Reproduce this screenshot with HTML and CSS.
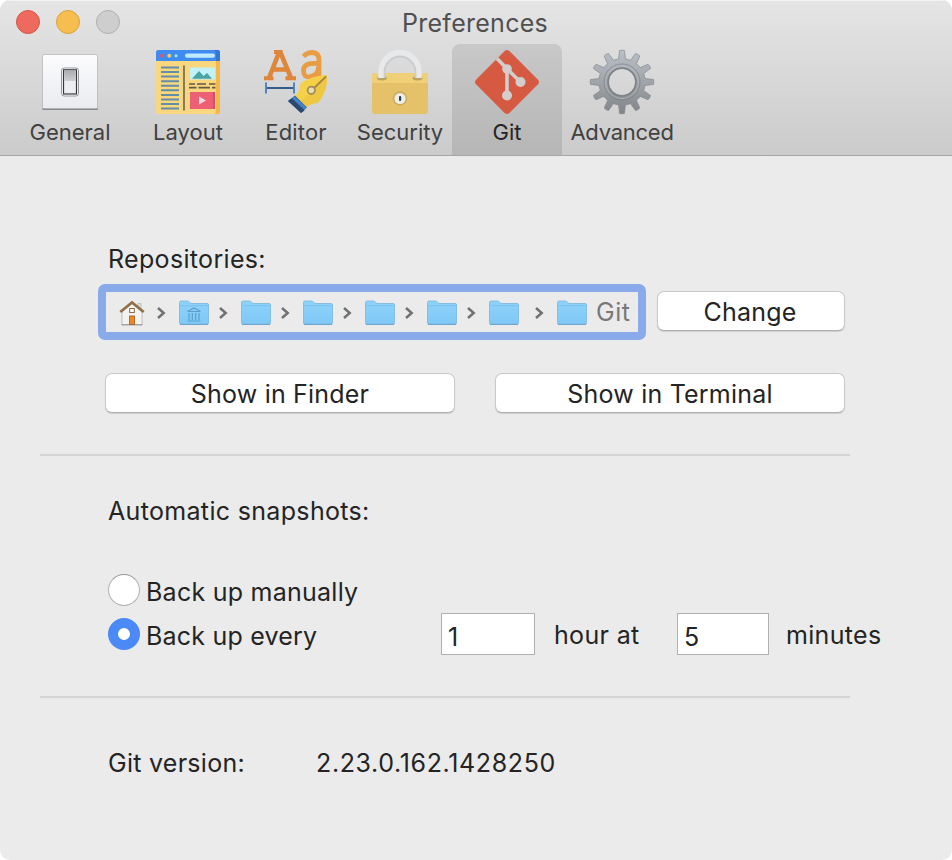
FILE: index.html
```html
<!DOCTYPE html>
<html lang="en">
<head>
<meta charset="utf-8">
<title>Preferences</title>
<link rel="stylesheet" href="styles.css">
</head>
<body>
<svg class="defs" width="0" height="0" aria-hidden="true">
  <defs>
    <linearGradient id="folderFill" x1="0" y1="0" x2="0" y2="1"><stop offset="0" stop-color="#8dd3fb"/><stop offset="1" stop-color="#80c9f6"/></linearGradient>
    <linearGradient id="gearFill" x1="0" y1="0" x2="0" y2="1"><stop offset="0" stop-color="#b9c0c6"/><stop offset=".5" stop-color="#a0a5aa"/><stop offset="1" stop-color="#818488"/></linearGradient>
    <linearGradient id="plate" x1="0" y1="0" x2="0" y2="1"><stop offset="0" stop-color="#fcfcfe"/><stop offset="1" stop-color="#e9ebef"/></linearGradient>
    <linearGradient id="rocker" x1="0" y1="0" x2="0" y2="1"><stop offset="0" stop-color="#a9abae"/><stop offset="1" stop-color="#cdcfd1"/></linearGradient>
    <symbol id="folder" viewBox="0 0 32 26">
      <path d="M1.500 23V2.500Q1.500 1 3 1H9.500Q10.500 1 11.500 2.200L13 3.500H29.500Q30.500 3.500 30.500 5V23Q30.500 24.300 29 24.300H3Q1.500 24.300 1.500 23Z" fill="url(#folderFill)" stroke="#78b6dc" stroke-width=".8"/>
      <path d="M2 5.700H30" stroke="#78bce6" stroke-width=".8"/><path d="M2 24.400H30" stroke="#68a4cb"/>
    </symbol>
    <symbol id="chevron" viewBox="0 0 10 14"><path d="M2 2L7.700 7L2 12" fill="none" stroke="#717171" stroke-width="2.500"/></symbol>
  </defs>
</svg>
<div class="window">
  <header class="titlebar">
    <div class="caption">
      <div class="lights"><i class="light close"></i><i class="light minimize"></i><i class="light zoom"></i></div>
      <h1 class="title">Preferences</h1>
    </div>
    <nav class="toolbar">
      <div class="tab general">
        <svg class="icon" viewBox="0 0 72 72">
          <rect x="8.500" y="9.500" width="55" height="55" rx="1.500" fill="url(#plate)" stroke="#b5b7ba" stroke-width=".8"/>
          <path d="M8.500 64.200H63.700" stroke="#77797c" stroke-width="1.300"/>
          <rect x="27.500" y="23" width="17" height="28" rx="2.500" fill="#fff" stroke="#97999c"/>
          <rect x="29.500" y="24.800" width="13" height="24.200" fill="#eceef1" stroke="#37383b" stroke-width="1.200"/>
          <path d="M30.200 25.400H41.800V36H30.200Z" fill="url(#rocker)"/>
        </svg>
        <span class="label">General</span>
      </div>
      <div class="tab layout">
        <svg class="icon" viewBox="0 0 72 72">
          <rect x="4" y="5" width="64" height="64" rx="2.500" fill="#f9d77f"/>
          <path d="M64 14H68V66.500Q68 69 65.500 69H62Q64 68 64 66Z" fill="#f6b745"/>
          <path d="M4 16V7.500Q4 5 6.500 5H65.500Q68 5 68 7.500V16Z" fill="#3f8cf0"/>
          <path d="M62 5H65.500Q68 5 68 7.500V16H64V7.500Z" fill="#3177d8"/>
          <circle cx="10" cy="10.700" r="2" fill="#d85875"/><circle cx="17.300" cy="10.700" r="2" fill="#eccb75"/><circle cx="24" cy="10.700" r="1.500" fill="#a8e8fa"/>
          <rect x="33" y="8.600" width="30" height="4.200" rx="2.100" fill="#bfe9ff"/>
          <path d="M9 22.500H27M9 27H27M9 31.600H27M9 36.200H27M9 40.800H27M9 45.300H27M9 49.900H27M9 54.400H27M9 59H27M9 63.500H27" stroke="#608fa6" stroke-width="2"/>
          <path d="M32 20.500V65.500" stroke="#7c715e" stroke-width="1.800"/>
          <rect x="38" y="22.500" width="25" height="12" fill="#c2f1f8"/><path d="M40 33.700L47 26L51.500 31L55 28L60 33.700Z" fill="#4aa3a5"/>
          <path d="M37 39H43M45 39H54M57 39H63.500M37 42.700H44.500M46.500 42.700H58M60 42.700H63.500" stroke="#665745" stroke-width="1.700"/>
          <rect x="38" y="47" width="25" height="17" fill="#ed5f74"/><path d="M61 47H63V64H61Z" fill="#d84e66"/><path d="M47 51.500L54 55.500L47 59.500Z" fill="#f9d8df"/>
        </svg>
        <span class="label">Layout</span>
      </div>
      <div class="tab editor">
        <svg class="icon" viewBox="0 0 72 72">
          <g fill="none" stroke="#de873a" stroke-width="4.600"><path d="M9 33L19 7.500H20.500L31 33M13 24.500H27.500"/><path d="M4 33.300H13.500M25.500 33.300H36M14 7H22.500" stroke-width="3.900"/></g>
          <path d="M43.500 11.500Q47 7.500 52.500 7.500Q59 7.800 59 15V33M58.500 18.500Q43.500 17 43.500 25.500Q43.500 32.500 49.500 31.800Q58.500 30.500 58.500 22" fill="none" stroke="#e99d43" stroke-width="4.800"/>
          <path d="M6 43H33" stroke="#335d8b" stroke-width="2"/><path d="M6 37.500V48.500M34 37.500V48.500" stroke="#5286bb" stroke-width="2"/>
          <path d="M35 51Q40 47 40.500 38.500Q50 31 67 30Q68 46 58 58Q52 58 46 62Z" fill="#f4d146"/>
          <path d="M67 30Q68 46 58 58Q52 58 46 62L41 56.500Z" fill="#e8bd40" opacity=".5"/>
          <path d="M52 45L66 31.500" stroke="#a58744" stroke-width="1.800"/><circle cx="51.300" cy="45.300" r="3.700" fill="#eadcae" stroke="#a08d60" stroke-width="1.800"/>
          <path d="M35 50.500L47 62.500L41 68L28 56Z" fill="#396ea9"/><path d="M31.500 53.500L44.500 65.500L41 68L28 56Z" fill="#29486e"/>
          <path d="M33.500 52.500L45.500 63.500" stroke="#4b87cb" stroke-width="2"/>
        </svg>
        <span class="label">Editor</span>
      </div>
      <div class="tab security">
        <svg class="icon" viewBox="0 0 72 72">
          <rect x="8" y="28" width="56" height="41" rx="3" fill="#e5c269"/>
          <path d="M8 37V32Q8 28 12 28H60Q64 28 64 32V38H8Z" fill="#efd079"/>
          <ellipse cx="18" cy="33.300" rx="4.800" ry="2.200" fill="#bda45e"/><ellipse cx="53.500" cy="33.300" rx="4.800" ry="2.200" fill="#bda45e"/>
          <path d="M17.500 33V26.500A18.500 18.500 0 0 1 54.500 26.500V33" fill="none" stroke="#e8e9ea" stroke-width="6.400"/>
          <path d="M20.500 33V27A15.500 15.500 0 0 1 51.500 27V33" fill="none" stroke="#cacdcd" stroke-width="1.800"/>
          <circle cx="36" cy="53.500" r="7.200" fill="#c9ab60"/><circle cx="36" cy="53.500" r="5.600" fill="#eeeee5"/><rect x="35" y="51" width="2.200" height="5" rx="1" fill="#263f54"/>
        </svg>
        <span class="label">Security</span>
      </div>
      <div class="tab git selected">
        <svg class="icon" viewBox="0 0 72 72">
          <path d="M33.600 6.100Q36 3.800 38.400 6.100L67 34.700Q69 37 67 39.300L38.400 68Q36 70 33.600 68L5 39.300Q3 37 5 34.700Z" fill="#d65a42"/>
          <path d="M26 13.500L36 23.700V50.500M36 23.700L49.500 37" fill="none" stroke="#d3cdcb" stroke-width="3.600"/>
          <g fill="#d3cdcb"><circle cx="36" cy="24" r="4.800"/><circle cx="36" cy="50.500" r="5"/><circle cx="49.500" cy="37" r="5"/></g>
        </svg>
        <span class="label">Git</span>
      </div>
      <div class="tab advanced">
        <svg class="icon" viewBox="0 0 72 72">
          <path d="M32.600 13.900L33.500 5.600Q36 4.700 38.500 5.600L39.400 13.900L44.600 15.300L49.500 8.500Q52.100 9 53.800 11L50.400 18.700L54.300 22.600L62 19.200Q64 20.900 64.500 23.500L57.700 28.400L59.100 33.600L67.400 34.500Q68.300 37 67.400 39.500L59.100 40.400L57.700 45.600L64.500 50.500Q64 53.100 62 54.800L54.300 51.400L50.400 55.300L53.800 63Q52.100 65 49.500 65.500L44.600 58.700L39.400 60.100L38.500 68.400Q36 69.300 33.500 68.400L32.600 60.100L27.400 58.700L22.500 65.500Q19.900 65 18.200 63L21.600 55.300L17.700 51.400L10 54.800Q8 53.100 7.500 50.500L14.300 45.600L12.900 40.400L4.600 39.500Q3.700 37 4.600 34.500L12.900 33.600L14.300 28.400L7.500 23.500Q8 20.900 10 19.200L17.700 22.600L21.600 18.700L18.200 11Q19.900 9 22.500 8.500L27.400 15.300ZM36 23.500A13.500 13.500 0 1 0 36 50.500A13.500 13.500 0 1 0 36 23.500Z" fill="url(#gearFill)" stroke="#83888c" stroke-width=".7" fill-rule="evenodd"/>
          <circle cx="36" cy="37" r="18" fill="none" stroke="#777d82" stroke-width="1" opacity=".65"/>
          <circle cx="36" cy="37" r="14" fill="none" stroke="#7c8286" stroke-width="1.500"/>
          <circle cx="36" cy="37" r="16.500" fill="none" stroke="#b8bdc1" stroke-width="1" opacity=".6"/>
        </svg>
        <span class="label">Advanced</span>
      </div>
    </nav>
  </header>
  <main class="content">
    <section class="repositories">
      <h2 class="heading t-repos">Repositories:</h2>
      <div class="path-row">
        <div class="path">
          <svg class="home" viewBox="0 0 28 28"><path d="M20 4.500H23V11H20Z" fill="#ddd" stroke="#aaa" stroke-width=".6"/><path d="M4 12L14 4L24 12V26H4Z" fill="#f3f3f2" stroke="#aaa" stroke-width=".7"/><path d="M3.500 25.700H24.500" stroke="#999"/><path d="M2.300 13L14 3.500L25.700 13" fill="none" stroke="#916f48" stroke-width="2.800"/><rect x="11.700" y="9.500" width="4.600" height="4" fill="#fff" stroke="#8c6a48"/><rect x="11.500" y="17" width="5" height="8.500" fill="#e98a27" stroke="#a96724" stroke-width=".9"/></svg>
          <svg class="chevron"><use href="#chevron"/></svg>
          <svg class="folder" viewBox="0 0 32 26"><use href="#folder"/><path d="M9.500 11.500L16 8L22.500 11.500ZM11 13V20M14.300 13V20M17.700 13V20M21 13V20M9.500 21H22.500" fill="none" stroke="#5aa0cf" stroke-width="1.200"/></svg>
          <svg class="chevron"><use href="#chevron"/></svg><svg class="folder"><use href="#folder"/></svg>
          <svg class="chevron"><use href="#chevron"/></svg><svg class="folder"><use href="#folder"/></svg>
          <svg class="chevron"><use href="#chevron"/></svg><svg class="folder"><use href="#folder"/></svg>
          <svg class="chevron"><use href="#chevron"/></svg><svg class="folder"><use href="#folder"/></svg>
          <svg class="chevron"><use href="#chevron"/></svg><svg class="folder"><use href="#folder"/></svg>
          <svg class="chevron last"><use href="#chevron"/></svg><svg class="folder"><use href="#folder"/></svg>
          <span class="leaf">Git</span>
        </div>
        <button class="button change">Change</button>
      </div>
      <div class="actions">
        <button class="button finder">Show in Finder</button>
        <button class="button terminal">Show in Terminal</button>
      </div>
    </section>
    <hr class="divider">
    <section class="snapshots">
      <h2 class="heading t-auto">Automatic snapshots:</h2>
      <div class="option"><i class="radio"></i><span class="t-manual">Back up manually</span></div>
      <div class="option"><i class="radio checked"></i><span class="every">Back up every</span><span class="field hours">1</span><span class="unit t-hour">hour at</span><span class="field mins">5</span><span class="unit t-min">minutes</span></div>
    </section>
    <hr class="divider">
    <section class="version"><span class="version-name">Git version:</span><span class="version-number">2.23.0.162.1428250</span></section>
  </main>
</div>
</body>
</html>
```
FILE: styles.css
```css
* { box-sizing: border-box; }
body { margin: 0; background: #fff; font: 420 25px/30px Inter, "Liberation Sans", sans-serif; letter-spacing: .2px; color: #242424; }
h1, h2 { margin: 0; font: inherit; }
svg { display: block; flex: none; }
.defs { position: absolute; }
.window { width: 952px; height: 860px; overflow: hidden; border-radius: 10px; background: #ebebeb; }
.titlebar { height: 156px; background: linear-gradient(#e5e5e5, #cbcbcb); border-bottom: 1px solid #a6a6a6; box-shadow: inset 0 1px #f3f3f3; }
.caption { display: grid; grid-template-columns: 402px 1fr; height: 44px; align-items: center; }
.lights { display: flex; gap: 16px; padding-left: 16px; }
.light { width: 24px; height: 24px; border-radius: 50%; border: 1px solid; }
.close { background: #ee6a5f; border-color: #d65549; }
.minimize { background: #f5be4f; border-color: #d9a23d; }
.zoom { background: #cecece; border-color: #b0b0b0; }
.title { color: #505050; padding-top: 2px; white-space: nowrap; letter-spacing: .27px; }
.toolbar { display: flex; padding-left: 11px; height: 111px; color: #414141; font-size: 22px; font-weight: 440; line-height: 28px; letter-spacing: 0; }
.tab { display: flex; flex-direction: column; align-items: center; padding-top: 1px; }
.icon { width: 72px; height: 72px; }
.label { margin-top: 1px; white-space: nowrap; }
.editor .label { letter-spacing: .15px; }
.advanced .label { letter-spacing: -.25px; }
.general, .layout { width: 118px; }
.editor { width: 98px; }
.security { width: 104px; margin-left: 3px; }
.git { width: 110px; }
.advanced { width: 120px; }
.selected { background: linear-gradient(#c8c8c8, #b6b6b6); border-radius: 8px 8px 0 0; color: #252525; }
.content { padding-top: 88px; white-space: nowrap; }
.heading { padding-left: 108px; height: 30px; letter-spacing: .33px; }
.path-row { display: flex; align-items: flex-start; padding: 10px 0 0 98px; }
.path { display: flex; align-items: center; width: 548px; height: 56px; border: 8px solid #8aabea; border-radius: 7px; padding-left: 12px; margin-right: 11px; }
.home { width: 28px; height: 28px; margin: 2px 10px 0 0; }
.chevron { width: 10px; height: 14px; margin: 1px 12px 0 0; }
.folder { width: 32px; height: 26px; margin: 1px 8px 0 0; }
.last { margin-left: 6px; }
.leaf { color: #797979; letter-spacing: .5px; }
.button { font: inherit; letter-spacing: inherit; color: inherit; height: 40px; border: 1px solid #c9c9c9; border-bottom-color: #b0b0b0; border-radius: 7px; background: #fff; padding: 2px 0 0; box-shadow: 0 1px 1px #0002; }
.change { width: 188px; margin-top: 7px; padding-right: 2px; }
.actions { display: flex; gap: 40px; padding: 33px 0 0 105px; }
.finder, .terminal { width: 350px; }
.divider { margin: 0 0 0 40px; width: 810px; height: 2px; border: 0; background: #d4d4d4; }
.repositories { height: 210px; }
.snapshots { padding-top: 40px; height: 240px; }
.t-auto { height: 72px; }
.option { display: flex; align-items: center; height: 44px; padding-left: 108px; }
.radio { width: 32px; height: 32px; flex: none; border-radius: 50%; border: 1px solid #b2b2b2; border-top-color: #969696; background: #fff; margin-right: 6px; }
.checked { border: 0; background: radial-gradient(circle, #fff 5.5px, #4b89f7 6.3px); }
.t-manual { letter-spacing: .25px; }
.every { width: 295px; }
.option span:not(.field) { padding-top: 4px; }
.option .unit:not(.field) { padding-top: 2px; letter-spacing: .33px; }
.field { background: #fff; border: 1px solid #b0b0b0; height: 42px; padding: 8px 0 0 6px; }
.hours { width: 94px; margin-right: 19px; }
.t-hour { width: 123px; }
.mins { width: 92px; margin-right: 17px; }
.version { display: flex; padding: 50px 0 0 108px; }
.version-name { width: 208px; letter-spacing: .27px; }
.version-number { letter-spacing: .63px; }
```
